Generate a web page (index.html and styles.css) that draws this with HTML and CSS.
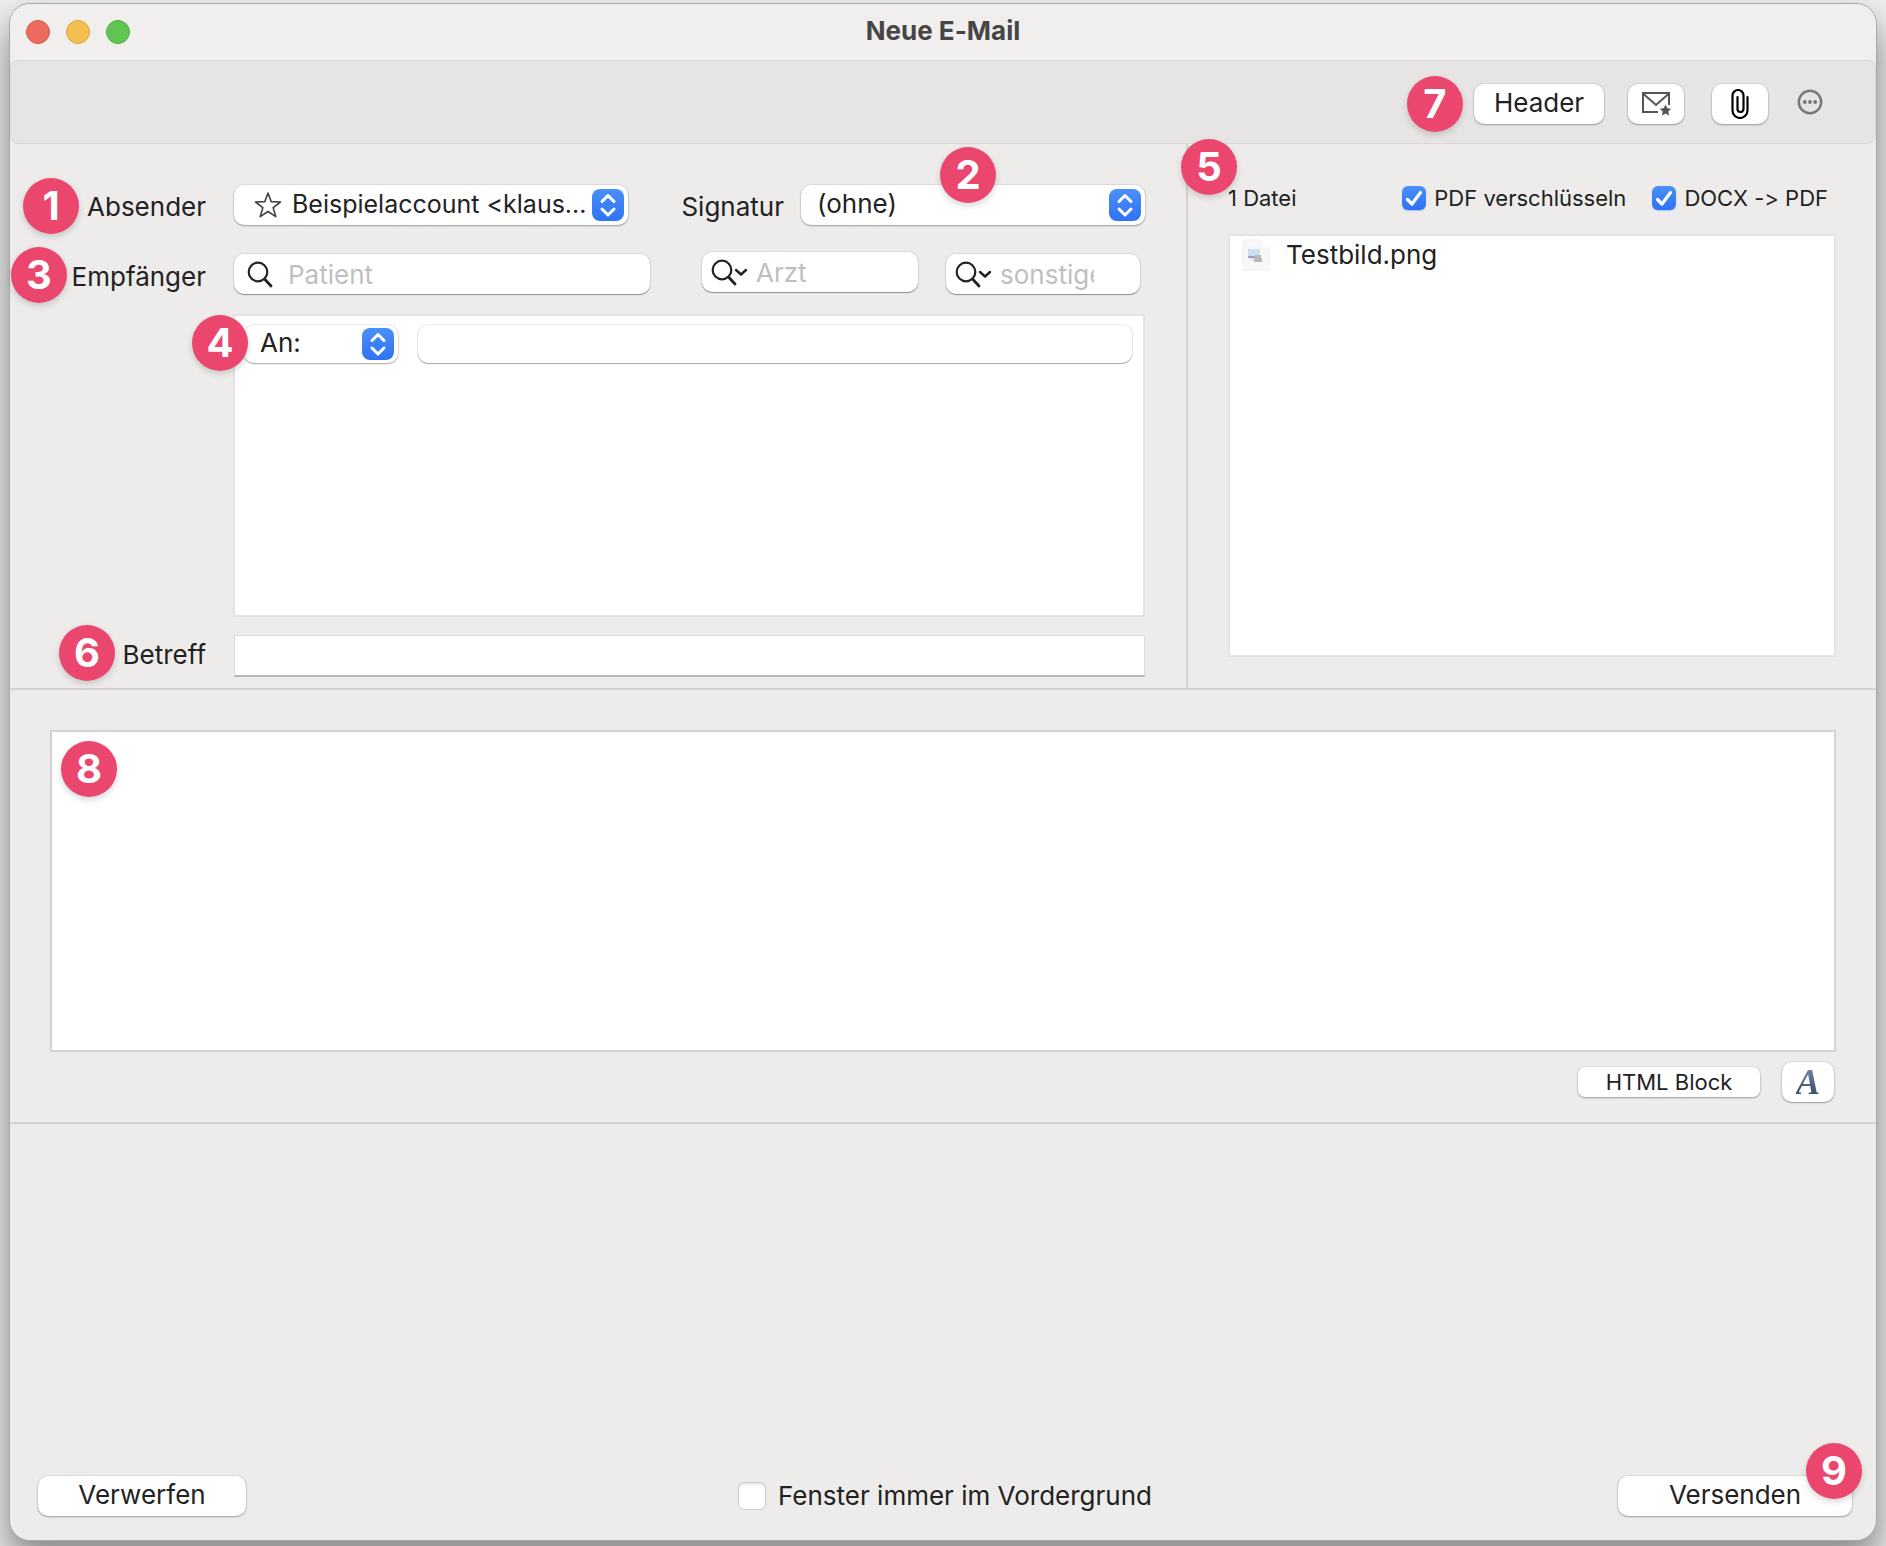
FILE: index.html
```html
<!DOCTYPE html>
<html lang="de">
<head>
<meta charset="utf-8">
<meta name="viewport" content="width=device-width, initial-scale=1">
<title>Neue E-Mail</title>
<link rel="stylesheet" href="styles.css">
</head>
<body>
<svg class="defs" aria-hidden="true">
  <defs>
    <symbol id="updown" viewBox="0 0 32 32"><path d="M10 12.5 16 6.5l6 6M10 20l6 6 6-6" fill="none" stroke="#fff" stroke-width="3" stroke-linecap="round" stroke-linejoin="round"/></symbol>
    <symbol id="loupe" viewBox="0 0 28 28"><circle cx="12" cy="12" r="9.3" fill="none" stroke="#222" stroke-width="2.2"/><path d="M18.5 19 25 26" fill="none" stroke="#222" stroke-width="2.8" stroke-linecap="round"/></symbol>
    <symbol id="loupe-menu" viewBox="0 0 38 28"><circle cx="12" cy="12" r="9.3" fill="none" stroke="#222" stroke-width="2.2"/><path d="M18.5 19 25 26" fill="none" stroke="#222" stroke-width="2.8" stroke-linecap="round"/><path d="M26 12l5 4.500 5-4.500" fill="none" stroke="#222" stroke-width="2.400" stroke-linecap="round" stroke-linejoin="round"/></symbol>
    <symbol id="tick" viewBox="0 0 24 24"><path d="M5.500 13.500 10 18 18.500 6.500" fill="none" stroke="#fff" stroke-width="3.200" stroke-linecap="round" stroke-linejoin="round"/></symbol>
  </defs>
</svg>
<main class="window">
  <header class="titlebar">
    <div class="lights">
      <button class="light light-close" type="button" aria-label="Schließen"></button>
      <button class="light light-min" type="button" aria-label="Minimieren"></button>
      <button class="light light-zoom" type="button" aria-label="Zoomen"></button>
    </div>
    <h1 class="title">Neue E-Mail</h1>
  </header>

  <div class="toolbar">
    <span class="anchor">
      <button class="btn btn-header" type="button">Header</button>
      <span class="badge badge-7">7</span>
    </span>
    <button class="btn btn-icon" type="button" aria-label="Vorlage">
      <svg width="30" height="24" viewBox="0 0 30 24"><path d="M17 20H2V1h26v12" fill="none" stroke="#555" stroke-width="2"/><path d="M2 1.500 15 13 28 1.500" fill="none" stroke="#555" stroke-width="2"/><path d="M24.500 12.500l1.800 3.700 4 .5-3 2.800.8 4-3.600-2-3.600 2 .8-4-3-2.800 4-.5z" fill="#555"/></svg>
    </button>
    <button class="btn btn-icon" type="button" aria-label="Anhang">
      <svg width="18" height="30" viewBox="0 0 18 30"><path d="M16.500 8v13.500a7.500 7.500 0 0 1-15 0V6.500a5.500 5.500 0 0 1 11 0v13.500a3 3 0 0 1-6 0V8" fill="none" stroke="#000" stroke-width="2.200" stroke-linecap="round"/></svg>
    </button>
    <button class="btn-more" type="button" aria-label="Mehr">
      <svg width="26" height="26" viewBox="0 0 26 26"><circle cx="13" cy="13" r="11.200" fill="none" stroke="#777" stroke-width="2.400"/><circle cx="7.800" cy="13" r="1.900" fill="#777"/><circle cx="13" cy="13" r="1.900" fill="#777"/><circle cx="18.200" cy="13" r="1.900" fill="#777"/></svg>
    </button>
  </div>

  <section class="compose">
    <div class="fields">
      <div class="row row-sender">
        <span class="label-cell"><label for="sender">Absender</label><span class="badge badge-1">1</span></span>
        <div class="popup popup-sender">
          <select id="sender"><option>Beispielaccount &lt;klaus...</option></select>
          <svg class="star" width="28" height="28" viewBox="0 0 28 28"><path d="M14 2l3.200 8.600 9.300.4-7.300 5.700 2.600 9L14 20.500 6.200 25.700l2.600-9L1.500 11l9.300-.4z" fill="none" stroke="#444" stroke-width="1.600" stroke-linejoin="round"/></svg>
          <svg class="arrows"><use href="#updown"/></svg>
        </div>
        <label class="label-sign" for="sign">Signatur</label>
        <div class="popup popup-sign">
          <select id="sign"><option>(ohne)</option></select>
          <svg class="arrows"><use href="#updown"/></svg>
          <span class="badge badge-2">2</span>
        </div>
      </div>

      <div class="row row-recipient">
        <span class="label-cell label-cell-up"><label for="patient">Empfänger</label><span class="badge badge-3">3</span></span>
        <div class="search search-patient">
          <svg class="loupe" width="28" height="28"><use href="#loupe"/></svg>
          <input id="patient" type="text" placeholder="Patient">
        </div>
        <div class="search search-doctor">
          <svg class="loupe" width="38" height="28"><use href="#loupe-menu"/></svg>
          <input type="text" placeholder="Arzt" aria-label="Arzt">
        </div>
        <div class="search search-other">
          <svg class="loupe" width="38" height="28"><use href="#loupe-menu"/></svg>
          <input type="text" placeholder="sonstige" aria-label="sonstige">
        </div>
      </div>

      <div class="row row-list">
        <div class="recipients">
          <div class="recipient">
            <div class="popup popup-kind">
              <select aria-label="Empfängerart"><option>An:</option></select>
              <svg class="arrows"><use href="#updown"/></svg>
            </div>
            <input class="address" type="text" aria-label="Adresse">
          </div>
          <span class="badge badge-4">4</span>
        </div>
      </div>

      <div class="row row-subject">
        <span class="label-cell label-cell-up"><label for="subject">Betreff</label><span class="badge badge-6">6</span></span>
        <input class="subject" id="subject" type="text">
      </div>
    </div>

    <aside class="files">
      <div class="files-head">
        <span class="count">1 Datei</span>
        <label class="check"><span class="tickbox"><input type="checkbox" checked><svg><use href="#tick"/></svg></span>PDF verschlüsseln</label>
        <label class="check"><span class="tickbox"><input type="checkbox" checked><svg><use href="#tick"/></svg></span>DOCX -&gt; PDF</label>
      </div>
      <ul class="file-list">
        <li class="file">
          <svg width="28" height="32" viewBox="0 0 28 32"><path d="M1 1h18l8 8v22H1z" fill="#f8f8f8" stroke="#efefef"/><path d="M19 1v8h8" fill="#fff" stroke="#f0f0f0"/><path d="M6 10h12v7H6z" fill="#cfdff3"/><path d="M6 17h12v2H6z" fill="#9aa3bd"/><path d="M7 19h10v3H9z" fill="#e4e4e2"/><path d="M13 16h6v3h1v4h-8v-4z" fill="#b9b9b7"/></svg>
          Testbild.png
        </li>
      </ul>
      <span class="badge badge-5">5</span>
    </aside>
  </section>

  <section class="body">
    <div class="editor-wrap">
      <textarea class="editor" aria-label="Nachricht"></textarea>
      <span class="badge badge-8">8</span>
    </div>
    <div class="editor-tools">
      <button class="btn btn-html" type="button">HTML Block</button>
      <button class="btn btn-font" type="button" aria-label="Schrift"><span class="font-glyph">A</span></button>
    </div>
  </section>

  <footer class="footer">
    <button class="btn btn-discard" type="button">Verwerfen</button>
    <label class="check check-large"><span class="tickbox"><input type="checkbox"><svg><use href="#tick"/></svg></span>Fenster immer im Vordergrund</label>
    <span class="anchor">
      <button class="btn btn-send" type="button">Versenden</button>
      <span class="badge badge-9">9</span>
    </span>
  </footer>
</main>
</body>
</html>
```

FILE: styles.css
```css
* { box-sizing: border-box; }

body {
  margin: 0;
  min-height: 100vh;
  display: flex;
  padding: 4px 10px 6px;
  overflow-x: hidden;
  background: #f0f0f0;
  color: #222;
  font: 26px/30px Inter, "Liberation Sans", sans-serif;
  font-feature-settings: "calt" 0;
}

button, input, select, textarea {
  margin: 0;
  border: 0;
  border-radius: 0;
  outline: 0;
  color: inherit;
  font: inherit;
}

svg { display: block; }
.defs { position: absolute; width: 0; height: 0; }

.window {
  flex: 1;
  min-width: 0;
  display: flex;
  flex-direction: column;
  border-radius: 20px;
  background: #edecea;
  box-shadow: 0 0 0 1px #a8a8a8, 0 20px 36px 4px rgba(0, 0, 0, .42);
}

/* Title bar and toolbar */
.titlebar {
  position: relative;
  display: flex;
  align-items: center;
  justify-content: center;
  height: 56px;
  border-radius: 20px 20px 0 0;
  background: #f0efed;
}
.lights {
  position: absolute;
  left: 16px;
  display: flex;
  gap: 16px;
}
.light {
  width: 24px;
  height: 24px;
  padding: 0;
  border: 1px solid;
  border-radius: 50%;
}
.light-close { background: #ed6a5e; border-color: #d8574b; }
.light-min { background: #f5bf4f; border-color: #dca73c; }
.light-zoom { background: #61c554; border-color: #4fae43; }
.title {
  margin: 0;
  padding-bottom: 2px;
  color: #464646;
  font-size: 26px;
  font-weight: 700;
}
.toolbar {
  display: flex;
  align-items: center;
  justify-content: flex-end;
  height: 84px;
  padding: 4px 52px 0 0;
  border: 1px solid #dad9d7;
  border-radius: 8px;
  background: #e6e5e3;
}
.anchor { position: relative; display: flex; }

.btn {
  display: flex;
  align-items: center;
  justify-content: center;
  height: 40px;
  padding: 0 0 2px;
  border-radius: 10px;
  background: #fff;
  box-shadow: 0 0 0 1px rgba(0, 0, 0, .06), 0 1px 2px rgba(0, 0, 0, .3);
}
.btn-header { width: 130px; }
.btn-icon { width: 56px; margin-left: 24px; padding: 0; }
.btn-icon + .btn-icon { margin-left: 28px; }
.btn-more { padding: 0; margin: 0 0 4px 29px; background: none; }

/* Numbered markers */
.badge {
  position: absolute;
  z-index: 2;
  width: 56px;
  height: 56px;
  border-radius: 50%;
  background: #eb466d;
  box-shadow: 0 3px 6px rgba(0, 0, 0, .16);
  color: #fff;
  font-size: 40px;
  font-weight: 700;
  line-height: 56px;
  text-align: center;
}
.badge-1 { right: 127px; top: -11px; }
.badge-2 { left: 139px; top: -38px; }
.badge-3 { right: 139px; top: -15px; }
.badge-4 { left: -43px; top: -1px; }
.badge-5 { left: -7px; top: -5px; }
.badge-6 { right: 91px; top: -15px; }
.badge-7 { right: 141px; top: -8px; }
.badge-8 { left: 11px; top: 11px; }
.badge-9 { right: -10px; top: -33px; }

/* Addressing fields and attachments */
.compose {
  display: grid;
  grid-template-columns: minmax(0, 1fr) 690px;
  border-bottom: 2px solid #d4d3d1;
}
.fields { padding: 41px 41px 11px 0; }
.row { display: flex; align-items: center; }
.label-cell {
  position: relative;
  flex: none;
  width: 196px;
  margin-right: 28px;
  padding-top: 3px;
  text-align: right;
}
.label-cell-up { padding: 0 0 2px; }
.row-recipient { align-items: flex-end; height: 42px; margin-top: 27px; }
.row-list { margin: 20px 0 18px 223px; }

.popup {
  position: relative;
  flex: none;
  height: 40px;
  border-radius: 10px;
  background: #fff;
  box-shadow: 0 0 0 1px rgba(0, 0, 0, .06), 0 1px 2px rgba(0, 0, 0, .3);
}
.popup select {
  width: 100%;
  height: 38px;
  padding: 0 40px 0 16px;
  appearance: none;
  background: none;
}
.arrows {
  position: absolute;
  right: 4px;
  top: 4px;
  width: 32px;
  height: 32px;
  border-radius: 8px;
  background: linear-gradient(#4a90f8, #2f72f6);
  pointer-events: none;
}
.star { position: absolute; left: 20px; top: 6px; }
.popup-sender { width: 394px; }
.popup-sender select { padding-left: 58px; padding-right: 0; font-size: 25px; }
.label-sign { margin: 3px 17px 0 auto; }
.popup-sign { width: 344px; }
.popup-kind { width: 154px; height: 38px; }
.popup-kind select { height: 36px; }
.popup-kind .arrows { top: 3px; }

.search {
  display: flex;
  flex: none;
  align-items: center;
  height: 40px;
  border-radius: 10px;
  background: #fff;
  box-shadow: 0 0 0 1px rgba(0, 0, 0, .07), 0 1px 1px rgba(0, 0, 0, .35);
}
.search input {
  flex: 1;
  width: 0;
  min-width: 0;
  height: 40px;
  padding: 0;
  background: none;
}
.search input::placeholder { color: #bfbfbf; opacity: 1; }
.loupe { flex: none; }
.search-patient { flex: 1; min-width: 0; margin-right: 52px; padding-left: 12px; }
.search-patient .loupe { margin-right: 14px; }
.search-doctor { align-self: flex-start; width: 216px; margin-right: 28px; padding-left: 8px; }
.search-other { width: 194px; margin-right: 5px; padding: 0 46px 0 8px; }
.search-doctor .loupe, .search-other .loupe { margin-right: 8px; }

.recipients {
  position: relative;
  width: 100%;
  height: 303px;
  border: 2px solid #e4e3e2;
  background: #fff;
}
.recipient {
  display: flex;
  align-items: center;
  gap: 20px;
  padding: 9px 11px 0 9px;
}
.address {
  flex: 1;
  min-width: 0;
  height: 38px;
  border-radius: 10px;
  background: #fff;
  box-shadow: 0 0 0 1px rgba(0, 0, 0, .07), 0 1px 1px rgba(0, 0, 0, .3);
}
.subject {
  flex: 1;
  min-width: 0;
  height: 42px;
  border: 1px solid #dcdbda;
  border-bottom: 2px solid #b8b8b6;
  background: #fff;
}

.files {
  position: relative;
  display: flex;
  flex-direction: column;
  padding: 39px 40px 31px;
  border-left: 2px solid #d4d3d1;
}
.files-head {
  display: flex;
  align-items: center;
  gap: 26px;
  margin-bottom: 21px;
  padding-right: 8px;
  font-size: 22px;
}
.count { margin-right: auto; }
.check { display: flex; align-items: center; gap: 8px; }
.tickbox { position: relative; display: block; width: 24px; height: 24px; }
.tickbox input {
  display: block;
  width: 100%;
  height: 100%;
  appearance: none;
  border-radius: 6px;
  background: #fff;
  box-shadow: inset 0 0 0 1px #cfcecd, inset 0 2px 3px rgba(0, 0, 0, .14);
}
.tickbox input:checked {
  background: linear-gradient(#4a90f8, #2f72f6);
  box-shadow: 0 1px 1px rgba(47, 114, 246, .35);
}
.tickbox svg {
  position: absolute;
  inset: 0;
  width: 100%;
  height: 100%;
  visibility: hidden;
  pointer-events: none;
}
.tickbox input:checked + svg { visibility: visible; }
.file-list {
  flex: 1;
  margin: 0;
  padding: 3px 12px;
  border: 2px solid #e4e3e2;
  background: #fff;
  list-style: none;
}
.file { display: flex; align-items: center; gap: 16px; height: 32px; }

/* Message body */
.body {
  padding: 40px 40px 20px;
  border-bottom: 2px solid #d4d3d1;
}
.editor-wrap { position: relative; }
.editor {
  display: block;
  width: 100%;
  height: 322px;
  border: 2px solid #d4d3d2;
  background: #fff;
  resize: none;
}
.editor-tools {
  display: flex;
  align-items: center;
  justify-content: flex-end;
  gap: 22px;
  margin-top: 10px;
  padding-right: 2px;
}
.btn-html { width: 182px; height: 30px; padding: 0; border-radius: 7px; font-size: 22px; }
.btn-font { width: 52px; padding: 0; }
.font-glyph {
  background: linear-gradient(#7c8db0, #2c3d5c);
  background-clip: text;
  color: transparent;
  font: italic bold 36px/40px "Liberation Serif", serif;
}

/* Footer */
.footer {
  display: grid;
  grid-template-columns: 1fr auto 1fr;
  align-items: center;
  margin-top: auto;
  padding: 0 24px 24px 28px;
}
.btn-discard { width: 208px; }
.btn-send { width: 234px; }
.check-large { gap: 12px; }
.check-large .tickbox { width: 28px; height: 28px; }
.footer .anchor { justify-self: end; }
```
